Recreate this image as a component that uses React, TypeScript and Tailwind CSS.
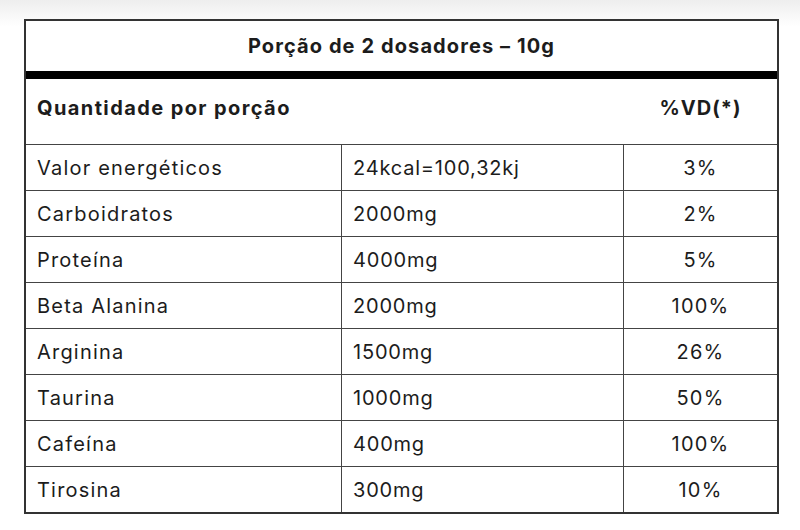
const rows = [
  { name: 'Valor energéticos', amount: '24kcal=100,32kj', vd: '3%' },
  { name: 'Carboidratos', amount: '2000mg', vd: '2%' },
  { name: 'Proteína', amount: '4000mg', vd: '5%' },
  { name: 'Beta Alanina', amount: '2000mg', vd: '100%' },
  { name: 'Arginina', amount: '1500mg', vd: '26%' },
  { name: 'Taurina', amount: '1000mg', vd: '50%' },
  { name: 'Cafeína', amount: '400mg', vd: '100%' },
  { name: 'Tirosina', amount: '300mg', vd: '10%' },
]

export default function App() {
  return (
    <div className="w-[800px] h-[530px] bg-linear-to-b from-[#eeeeee] via-white via-[5%] to-white pt-[19px] pl-[24px] font-['Inter',sans-serif] text-[#1c1c1c]">
      <div className="w-[755px] border-2 border-[#333] bg-white">
        <div className="h-[50px] flex items-center justify-center text-[20px] font-bold tracking-[0.055em]">
          Porção de 2 dosadores – 10g
        </div>
        <div className="h-[8px] bg-black" />
        <div className="h-[65px] pb-[8px] grid grid-cols-[316px_282px_1fr] items-center text-[20px] font-bold tracking-[0.07em]">
          <div className="pl-[11px]">Quantidade por porção</div>
          <div />
          <div className="text-center tracking-[0.05em]">%VD(*)</div>
        </div>
        {rows.map((r) => (
          <div
            key={r.name}
            className="h-[46px] grid grid-cols-[316px_282px_1fr] border-t-[1.5px] border-[#444] text-[20px] tracking-[0.06em]"
          >
            <div className="flex items-center pl-[11px] border-r-[1.5px] border-[#444]">{r.name}</div>
            <div className="flex items-center pl-[11px] border-r-[1.5px] border-[#444] tracking-[0.04em]">{r.amount}</div>
            <div className="flex items-center justify-center">{r.vd}</div>
          </div>
        ))}
      </div>
    </div>
  )
}
